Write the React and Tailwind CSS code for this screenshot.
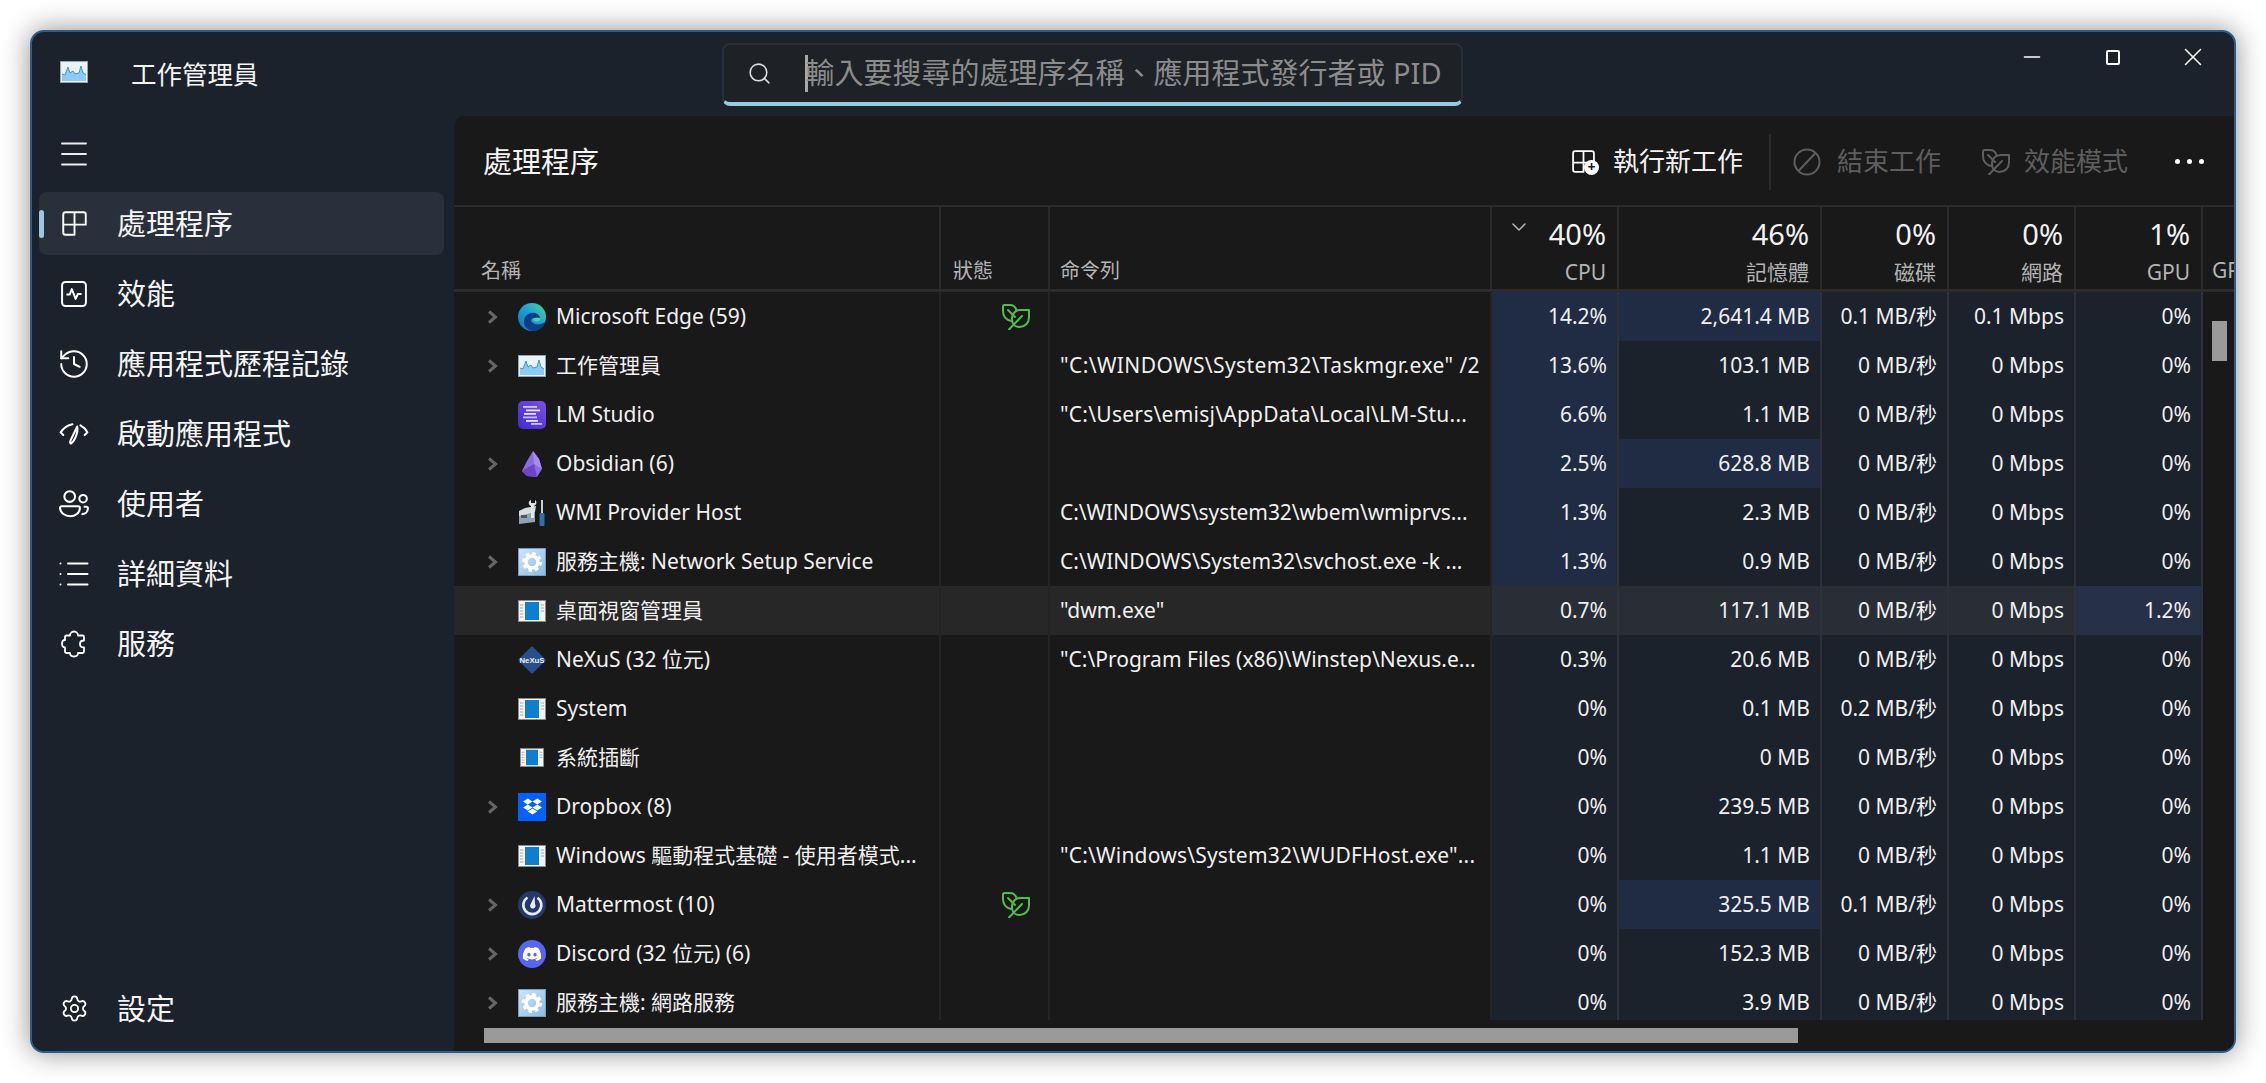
// App.jsx
import { History, List, Settings, Menu, Search, Minus, X, ChevronDown } from "lucide-react";
import { FaDiscord, FaDropbox } from "react-icons/fa";

const font = { fontFamily: '"Noto Sans", "Noto Sans CJK TC", sans-serif' };

function ProcIcon({ className = "" }) {
  return (
    <svg viewBox="0 0 24 24" className={className} fill="none" stroke="currentColor" strokeWidth="1.7" strokeLinejoin="round">
      <path d="M4 2h16a2 2 0 0 1 2 2v9H12v9H4a2 2 0 0 1-2-2V4a2 2 0 0 1 2-2Z" />
      <path d="M12 2v11M2 13h10" />
    </svg>
  );
}
function PerfIcon({ className = "" }) {
  return (
    <svg viewBox="0 0 24 24" className={className} fill="none" stroke="currentColor" strokeWidth="1.8" strokeLinejoin="round">
      <rect x="1" y="1" width="22" height="22" rx="3" />
      <path d="M5 12.5h3l2-5 3.5 9 2-4.500h3.500" />
    </svg>
  );
}
function GaugeIcon({ className = "" }) {
  return (
    <svg viewBox="0 0 28 22" className={className} fill="none" stroke="currentColor" strokeWidth="1.9" strokeLinecap="round" strokeLinejoin="round">
      <path d="M4 12 1.5 9.5C4 6 7.5 3 12.5 2" />
      <path d="M20 3c3 1.500 5 3.500 6.500 6.500L24 12" />
      <path d="M11 20c-1-1-.8-2 0-3.500L17 4c.6 3 .2 6-1.500 10-1.300 3-2.500 5-4.500 6Z" />
    </svg>
  );
}
function UsersIcon({ className = "" }) {
  return (
    <svg viewBox="0 0 28 26" className={className} fill="none" stroke="currentColor" strokeWidth="1.9" strokeLinejoin="round">
      <circle cx="10" cy="6" r="5" />
      <circle cx="22.5" cy="8" r="3.5" />
      <path d="M2.5 15H18a1.500 1.500 0 0 1 1.500 1.500c0 5-4.500 8-9 8s-9.500-3-9.500-8A1.500 1.500 0 0 1 2.500 15Z" />
      <path d="M23 15.5h2.500A1.500 1.500 0 0 1 27 17c0 3.500-2.500 5.500-6 5.500" />
    </svg>
  );
}
function PuzzleIcon({ className = "" }) {
  return (
    <svg viewBox="0 0 26 28" className={className} fill="none" stroke="currentColor" strokeWidth="1.8" strokeLinejoin="round">
      <path d="M13 1.500c2.500 0 4 2 4 4h4.500A1.500 1.500 0 0 1 23 7v3.500c-2.500 0-4 1.500-4 3.500s1.500 3.500 4 3.500v4A1.500 1.500 0 0 1 21.500 23H17c0 2-1.500 3.500-4 3.500S9 25 9 23H5.500A1.500 1.500 0 0 1 4 21.500v-4c-2 0-3-1.500-3-3.500s1-4 3-4V7a1.500 1.500 0 0 1 1.500-1.500H9c0-2 1.500-4 4-4Z" />
    </svg>
  );
}
function LeafIcon({ className = "" }) {
  return (
    <svg viewBox="0 0 28 26" className={className} fill="none" stroke="currentColor" strokeWidth="2" strokeLinecap="round" strokeLinejoin="round">
      <path d="M9.5 17C4 16 1 12 1 7V2.500A1.500 1.500 0 0 1 2.500 1H8c3 0 5.500 2 6.500 5" />
      <path d="M10 15c0-6 4-9 8.500-9H27v7.500C27 19 23 23 17.500 23 13 23 10 20 10 15Z" />
      <path d="M7 25.500 20 12M6 6l7 7" />
    </svg>
  );
}
function NewTaskIcon() {
  return (
    <div className="relative w-[26px] h-[26px]">
      <ProcIcon className="w-[25px] h-[25px] -ml-[2px] text-white" />
      <div className="absolute right-0 bottom-0 w-[15px] h-[15px] rounded-full bg-white flex items-center justify-center text-[#191919] text-[14px] leading-none font-bold">+</div>
    </div>
  );
}

function TaskmgrIcon() {
  return (
    <svg viewBox="0 0 28 22" className="w-7 h-[22px]">
      <rect x="0.5" y="0.5" width="27" height="21" fill="#e8f4fc" stroke="#9aa4ac" />
      <path d="M2 20V13L5 14 8 6 10 12 13 10 15 13 19 12 21 5 23 12 26 14V20H2Z" fill="#8ccbf3" />
      <path d="M2 13 5 14 8 6 10 12 13 10 15 13 19 12 21 5 23 12 26 14" fill="none" stroke="#3d94d8" strokeWidth="1" />
    </svg>
  );
}
function EdgeIcon() {
  return (
    <svg viewBox="0 0 28 28" className="w-7 h-7">
      <defs>
        <linearGradient id="edgeA" x1="0" y1="1" x2="1" y2="0">
          <stop offset="0" stopColor="#0f6fc0" />
          <stop offset="0.55" stopColor="#1fa3d8" />
          <stop offset="1" stopColor="#54d68c" />
        </linearGradient>
      </defs>
      <circle cx="14" cy="14" r="14" fill="url(#edgeA)" />
      <path d="M6 19C6 12 12 9 17 10c3 .5 5 3 5 5h-6c-3 0-4 3-1 5 3 2 8 2 12-1-2 6-7 9-12 9-5-1-9-4-9-9Z" fill="#0b3f86" />
      <path d="M15 16c1-1.500 4-1.500 7-1 1 2-1 3.500-4 3.500-1.500 0-3-1-3-2.500Z" fill="#4fd6a0" />
    </svg>
  );
}
function LmIcon() {
  return (
    <svg viewBox="0 0 28 28" className="w-7 h-7">
      <defs>
        <linearGradient id="lmA" x1="1" y1="0" x2="0" y2="1">
          <stop offset="0" stopColor="#7b4fe6" />
          <stop offset="1" stopColor="#3f2bd0" />
        </linearGradient>
      </defs>
      <rect width="28" height="28" rx="5" fill="url(#lmA)" />
      <g fill="#e9e4ff">
        <rect x="5" y="5" width="14" height="1.8" opacity="0.8" />
        <rect x="8" y="8.5" width="14" height="1.8" />
        <rect x="6" y="12" width="12" height="1.8" />
        <rect x="5" y="15.5" width="14" height="1.8" opacity="0.8" />
        <rect x="8" y="19" width="12" height="1.8" />
        <rect x="13" y="22" width="11" height="1.8" opacity="0.8" />
      </g>
    </svg>
  );
}
function ObsidianIcon() {
  return (
    <svg viewBox="0 0 28 28" className="w-7 h-7">
      <path d="M15 1 21 9 24 19 19 27 9 26 4 21 9 11Z" fill="#8a6be0" />
      <path d="M15 1 21 9 24 19 16 14Z" fill="#a78bf0" />
      <path d="M4 21 16 14 19 27 9 26Z" fill="#6a45c8" />
    </svg>
  );
}
function WmiIcon() {
  return (
    <svg viewBox="0 0 28 28" className="w-7 h-7">
      <path d="M1 12 17 8V23L1 25Z" fill="#8fa2ad" />
      <path d="M1 12 7 9 18 7 17 13 1 17Z" fill="#d5dde2" />
      <rect x="3" y="16" width="6" height="3" fill="#4a5963" />
      <path d="M13 1c-3 1-3 5 0 6v12h3V7c3-1 3-5 1-6v3h-4Z" fill="#e2e6e9" />
      <rect x="23" y="1" width="2" height="13" fill="#c9ced2" />
      <rect x="21.5" y="14" width="5" height="13" rx="1" fill="#2f6fb0" />
    </svg>
  );
}
function GearIcon() {
  return (
    <svg viewBox="0 0 28 28" className="w-7 h-7">
      <defs>
        <linearGradient id="gearA" x1="0" y1="0" x2="1" y2="1">
          <stop offset="0" stopColor="#cfe6f8" />
          <stop offset="1" stopColor="#88bbe6" />
        </linearGradient>
      </defs>
      <rect x="0.5" y="0.5" width="27" height="27" fill="url(#gearA)" stroke="#7a9cb8" />
      <circle cx="14" cy="14" r="8.5" fill="none" stroke="#fff" strokeWidth="3" strokeDasharray="3.5 3.17" />
      <circle cx="14" cy="14" r="6" fill="none" stroke="#fff" strokeWidth="3.5" />
    </svg>
  );
}
function WindowIcon({ small }) {
  return (
    <svg viewBox="0 0 28 22" className={small ? "w-6 h-[19px]" : "w-7 h-[22px]"}>
      <rect x="0.5" y="0.5" width="27" height="21" fill="#f4f4f4" stroke="#8d8d8d" />
      <rect x="7" y="2" width="14" height="18" fill="#0f7ed0" />
      <g stroke="#a8a8a8" strokeWidth="1">
        <path d="M2 5h3M2 8h3M2 11h3M2 14h3M2 17h3M23 5h3M23 8h3M23 11h3" />
      </g>
    </svg>
  );
}
function NexusIcon() {
  return (
    <svg viewBox="0 0 28 28" className="w-7 h-7">
      <path d="M14 0 28 14 14 28 0 14Z" fill="#264f8e" />
      <text x="14" y="17" textAnchor="middle" textLength="25" lengthAdjust="spacingAndGlyphs" fontSize="8" fontWeight="700" fill="#eeeeee" fontFamily="Liberation Sans, sans-serif">NeXuS</text>
    </svg>
  );
}
function DropboxIcon() {
  return (
    <div className="w-7 h-7 bg-[#0061fe] flex items-center justify-center">
      <FaDropbox className="w-[19px] h-[19px] text-white" />
    </div>
  );
}
function MattermostIcon() {
  return (
    <svg viewBox="0 0 28 28" className="w-7 h-7">
      <circle cx="14" cy="14" r="14" fill="#23396b" />
      <path d="M9.5 6.500a9 9 0 1 0 10 .2" fill="none" stroke="#e8ecf5" strokeWidth="2.6" />
      <path d="M16.5 5 17 13a2.800 2.800 0 1 1-5 1.500Z" fill="#e8ecf5" />
    </svg>
  );
}
function DiscordIcon() {
  return (
    <div className="w-7 h-7 rounded-full bg-[#5865f2] flex items-center justify-center">
      <FaDiscord className="w-[20px] h-[20px] text-white" />
    </div>
  );
}

const rows = [
  { name: "Microsoft Edge (59)", icon: <EdgeIcon />, exp: true, leaf: true, cmd: "", cpu: "14.2%", mem: "2,641.4 MB", disk: "0.1 MB/秒", net: "0.1 Mbps", gpu: "0%", cpuHot: true, memHot: true },
  { name: "工作管理員", icon: <TaskmgrIcon />, exp: true, cmd: '"C:\\WINDOWS\\System32\\Taskmgr.exe" /2', track: "tracking-[0.4px]", cpu: "13.6%", mem: "103.1 MB", disk: "0 MB/秒", net: "0 Mbps", gpu: "0%", cpuHot: true },
  { name: "LM Studio", icon: <LmIcon />, cmd: '"C:\\Users\\emisj\\AppData\\Local\\LM-Stu...', track: "tracking-[0.25px]", cpu: "6.6%", mem: "1.1 MB", disk: "0 MB/秒", net: "0 Mbps", gpu: "0%", cpuHot: true },
  { name: "Obsidian (6)", icon: <ObsidianIcon />, exp: true, cmd: "", cpu: "2.5%", mem: "628.8 MB", disk: "0 MB/秒", net: "0 Mbps", gpu: "0%", cpuHot: true, memHot: true },
  { name: "WMI Provider Host", icon: <WmiIcon />, cmd: "C:\\WINDOWS\\system32\\wbem\\wmiprvs...", track: "tracking-[-0.1px]", cpu: "1.3%", mem: "2.3 MB", disk: "0 MB/秒", net: "0 Mbps", gpu: "0%", cpuHot: true },
  { name: "服務主機: Network Setup Service", icon: <GearIcon />, exp: true, cmd: "C:\\WINDOWS\\System32\\svchost.exe -k ...", cpu: "1.3%", mem: "0.9 MB", disk: "0 MB/秒", net: "0 Mbps", gpu: "0%", cpuHot: true },
  { name: "桌面視窗管理員", icon: <WindowIcon />, cmd: '"dwm.exe"', cpu: "0.7%", mem: "117.1 MB", disk: "0 MB/秒", net: "0 Mbps", gpu: "1.2%", active: true, gpuHot: true },
  { name: "NeXuS (32 位元)", icon: <NexusIcon />, cmd: '"C:\\Program Files (x86)\\Winstep\\Nexus.e...', cpu: "0.3%", mem: "20.6 MB", disk: "0 MB/秒", net: "0 Mbps", gpu: "0%" },
  { name: "System", icon: <WindowIcon />, cmd: "", cpu: "0%", mem: "0.1 MB", disk: "0.2 MB/秒", net: "0 Mbps", gpu: "0%" },
  { name: "系統插斷", icon: <WindowIcon small />, cmd: "", cpu: "0%", mem: "0 MB", disk: "0 MB/秒", net: "0 Mbps", gpu: "0%" },
  { name: "Dropbox (8)", icon: <DropboxIcon />, exp: true, cmd: "", cpu: "0%", mem: "239.5 MB", disk: "0 MB/秒", net: "0 Mbps", gpu: "0%" },
  { name: "Windows 驅動程式基礎 - 使用者模式...", icon: <WindowIcon />, cmd: '"C:\\Windows\\System32\\WUDFHost.exe"...', track: "tracking-[0.2px]", cpu: "0%", mem: "1.1 MB", disk: "0 MB/秒", net: "0 Mbps", gpu: "0%" },
  { name: "Mattermost (10)", icon: <MattermostIcon />, exp: true, leaf: true, cmd: "", cpu: "0%", mem: "325.5 MB", disk: "0.1 MB/秒", net: "0 Mbps", gpu: "0%", memHot: true },
  { name: "Discord (32 位元) (6)", icon: <DiscordIcon />, exp: true, cmd: "", cpu: "0%", mem: "152.3 MB", disk: "0 MB/秒", net: "0 Mbps", gpu: "0%" },
  { name: "服務主機: 網路服務", icon: <GearIcon />, exp: true, cmd: "", cpu: "0%", mem: "3.9 MB", disk: "0 MB/秒", net: "0 Mbps", gpu: "0%" },
];

const navItems = [
  { label: "處理程序", icon: <ProcIcon className="w-[27px] h-[27px] shrink-0" />, active: true },
  { label: "效能", icon: <PerfIcon className="w-[26px] h-[26px] shrink-0" /> },
  { label: "應用程式歷程記錄", icon: <History className="w-[34px] h-[34px] shrink-0" strokeWidth={1.4} /> },
  { label: "啟動應用程式", icon: <GaugeIcon className="w-[30px] h-[24px] shrink-0" /> },
  { label: "使用者", icon: <UsersIcon className="w-[30px] h-[28px] shrink-0" /> },
  { label: "詳細資料", icon: <List className="w-[36px] h-[36px] shrink-0" strokeWidth={1.3} /> },
  { label: "服務", icon: <PuzzleIcon className="w-[26px] h-[28px] shrink-0" /> },
];

const grid = "grid grid-cols-[487px_109px_442px_127px_203px_127px_127px_127px_1fr]";

function NavItem({ item }) {
  return (
    <div className={`relative h-[63px] rounded-lg flex items-center ${item.active ? "bg-[#2a303b]" : ""}`}>
      {item.active && <div className="absolute left-0 top-[18px] w-[5px] h-[28px] rounded-full bg-[#9ac8de]" />}
      <div className="w-[30px] ml-[20px] flex justify-center text-white">{item.icon}</div>
      <div className="ml-[28px] text-[29px] text-[#f4f4f4]">{item.label}</div>
    </div>
  );
}

function HeadCell({ pct, label, sort }) {
  return (
    <div className="relative h-full border-r-2 border-[#2b2b2b] pr-[11px] flex flex-col items-end">
      {sort && <ChevronDown className="absolute left-[15px] top-[8px] w-[24px] h-[24px] text-[#b5b5b5]" strokeWidth={1.5} />}
      <div className="mt-[7px] text-[29px] leading-[40px] text-[#f2f2f2]">{pct}</div>
      <div className="mt-[4px] text-[21px] leading-[28px] text-[#b4b4b4]">{label}</div>
    </div>
  );
}

function Heat({ children, bg }) {
  return <div className={`h-full border-r-2 border-[#2e3138] flex items-center justify-end whitespace-nowrap pr-[10px] ${bg}`}>{children}</div>;
}

function Row({ r }) {
  const cold = r.active ? "bg-[#282d36]" : "bg-[#1b222c]";
  const plain = r.active ? "bg-[#272727]" : "";
  return (
    <div className={`${grid} h-[49px] text-[21px] text-[#f0f0f0]`}>
      <div className={`h-full border-r-2 border-[#242424] flex items-center overflow-hidden ${plain}`}>
        <div className="w-[64px] flex pl-[33px] shrink-0">
          {r.exp && (
            <svg viewBox="0 0 11 14" className="w-[11px] h-[14px] text-[#666666]" fill="none" stroke="currentColor" strokeWidth="3">
              <path d="M2 1.500 8.500 7 2 12.500" />
            </svg>
          )}
        </div>
        <div className="w-[28px] flex justify-center shrink-0">{r.icon}</div>
        <div className="ml-[10px] whitespace-nowrap">{r.name}</div>
      </div>
      <div className={`h-full border-r-2 border-[#242424] flex items-center justify-end pr-[18px] ${plain}`}>
        {r.leaf && <LeafIcon className="w-[28px] h-[26px] text-[#4fbf4a]" />}
      </div>
      <div className={`h-full border-r-2 border-[#242424] flex items-center pl-[10px] overflow-hidden whitespace-nowrap ${plain} ${r.track || ""}`}>{r.cmd}</div>
      <Heat bg={r.cpuHot ? "bg-[#1f2c43]" : cold}>{r.cpu}</Heat>
      <Heat bg={r.memHot ? "bg-[#1f2c43]" : cold}>{r.mem}</Heat>
      <Heat bg={cold}>{r.disk}</Heat>
      <Heat bg={cold}>{r.net}</Heat>
      <Heat bg={r.gpuHot ? "bg-[#263148]" : cold}>{r.gpu}</Heat>
    </div>
  );
}

export default function App() {
  return (
    <div className="w-[2266px] h-[1083px] bg-white p-[30px] overflow-hidden" style={font}>
      <div className="w-[2206px] h-[1023px] rounded-[14px] border-2 border-[#2a5f8c] bg-[#1b222c] shadow-[0_0_28px_rgba(0,0,0,0.45)] flex flex-col overflow-hidden">
        {/* title bar */}
        <div className="h-[84px] shrink-0 flex items-center relative">
          <div className="ml-[28px] -mt-[4px]"><TaskmgrIcon /></div>
          <div className="ml-[43px] text-[25.5px] text-[#f4f4f4]">工作管理員</div>
          <div className="ml-[463px] w-[741px] h-[63px] rounded-lg bg-[#1e2126] border-2 border-b-[4px] border-[#2a2f37] border-b-[#9ac8de] flex items-center">
            <Search className="ml-[23px] w-[25px] h-[25px] text-[#dcdcdc]" strokeWidth={1.5} />
            <div className="ml-[33px] w-[3px] h-[37px] bg-[#a8a8a8]" />
            <div className="-ml-[2px] text-[29px] text-[#8c8c8c] whitespace-nowrap">輸入要搜尋的處理序名稱、應用程式發行者或 PID</div>
          </div>
          <div className="ml-auto flex items-center -mt-[34px] pr-[26px] text-white">
            <Minus className="w-[26px] h-[26px]" strokeWidth={1.3} />
            <div className="ml-[61px] w-[14px] h-[15px] border-2 border-white rounded-[2px]" />
            <X className="ml-[58px] w-[30px] h-[30px]" strokeWidth={1.2} />
          </div>
        </div>

        <div className="flex-1 flex min-h-0">
          {/* sidebar */}
          <div className="w-[422px] shrink-0 flex flex-col pl-[7px] pr-[10px] pb-[11px]">
            <div className="ml-[17px] h-[76px] flex items-center text-[#eeeeee]"><Menu className="w-[36px] h-[36px]" strokeWidth={1.2} /></div>
            <div className="flex flex-col gap-[7px]">
              {navItems.map((n) => <NavItem key={n.label} item={n} />)}
            </div>
            <div className="mt-auto">
              <NavItem item={{ label: "設定", icon: <Settings className="w-[29px] h-[29px] shrink-0" strokeWidth={1.5} /> }} />
            </div>
          </div>

          {/* main panel */}
          <div className="relative flex-1 min-w-0 bg-[#191919] rounded-tl-[10px] flex flex-col overflow-hidden">
            <div className="h-[91px] shrink-0 pt-[2px] flex items-center border-b-[2px] border-[#2b2b2b]">
              <div className="ml-[29px] text-[29px] text-[#f4f4f4]">處理程序</div>
              <div className="ml-auto flex items-center text-[26px] pr-[30px]">
                <NewTaskIcon />
                <div className="ml-[14px] text-[#f2f2f2]">執行新工作</div>
                <div className="ml-[26px] w-[2px] h-[56px] bg-[#2b2b2b]" />
                <svg viewBox="0 0 28 28" className="ml-[22px] w-[28px] h-[28px] text-[#5e5e5e]" fill="none" stroke="currentColor" strokeWidth="2">
                  <circle cx="14" cy="14" r="12.5" />
                  <path d="M5.5 23 22.500 5" />
                </svg>
                <div className="ml-[16px] text-[#5e5e5e]">結束工作</div>
                <LeafIcon className="ml-[41px] w-[28px] h-[26px] text-[#5e5e5e]" />
                <div className="ml-[14px] text-[#5e5e5e]">效能模式</div>
                <div className="ml-[47px] flex gap-[7px]">
                  <div className="w-[5px] h-[5px] rounded-full bg-white" />
                  <div className="w-[5px] h-[5px] rounded-full bg-white" />
                  <div className="w-[5px] h-[5px] rounded-full bg-white" />
                </div>
              </div>
            </div>

            <div className={`${grid} h-[85px] shrink-0 border-b-[3px] border-[#2b2b2b] overflow-hidden`}>
              <div className="h-full border-r-2 border-[#2b2b2b] flex items-end pl-[27px] pb-[3px] text-[20px] text-[#b4b4b4]">名稱</div>
              <div className="h-full border-r-2 border-[#2b2b2b] flex items-end pl-[12px] pb-[3px] text-[20px] text-[#b4b4b4]">狀態</div>
              <div className="h-full border-r-2 border-[#2b2b2b] flex items-end pl-[10px] pb-[3px] text-[20px] text-[#b4b4b4]">命令列</div>
              <HeadCell pct="40%" label="CPU" sort />
              <HeadCell pct="46%" label="記憶體" />
              <HeadCell pct="0%" label="磁碟" />
              <HeadCell pct="0%" label="網路" />
              <HeadCell pct="1%" label="GPU" />
              <div className="h-full flex items-end pl-[9px] pb-[3px] text-[21px] text-[#b4b4b4] whitespace-nowrap overflow-hidden">GPU 引擎</div>
            </div>

            <div className="flex-1 min-h-0 overflow-hidden">
              {rows.map((r) => <Row key={r.name} r={r} />)}
            </div>

            <div className="h-[31px] shrink-0 pt-[8px] pl-[30px]">
              <div className="w-[1314px] h-[15px] bg-[#9a9a9a]" />
            </div>

            {/* vertical scrollbar thumb */}
            <div className="absolute left-[1758px] top-[205px] w-[15px] h-[40px] bg-[#9a9a9a]" />
          </div>
        </div>
      </div>
    </div>
  );
}
